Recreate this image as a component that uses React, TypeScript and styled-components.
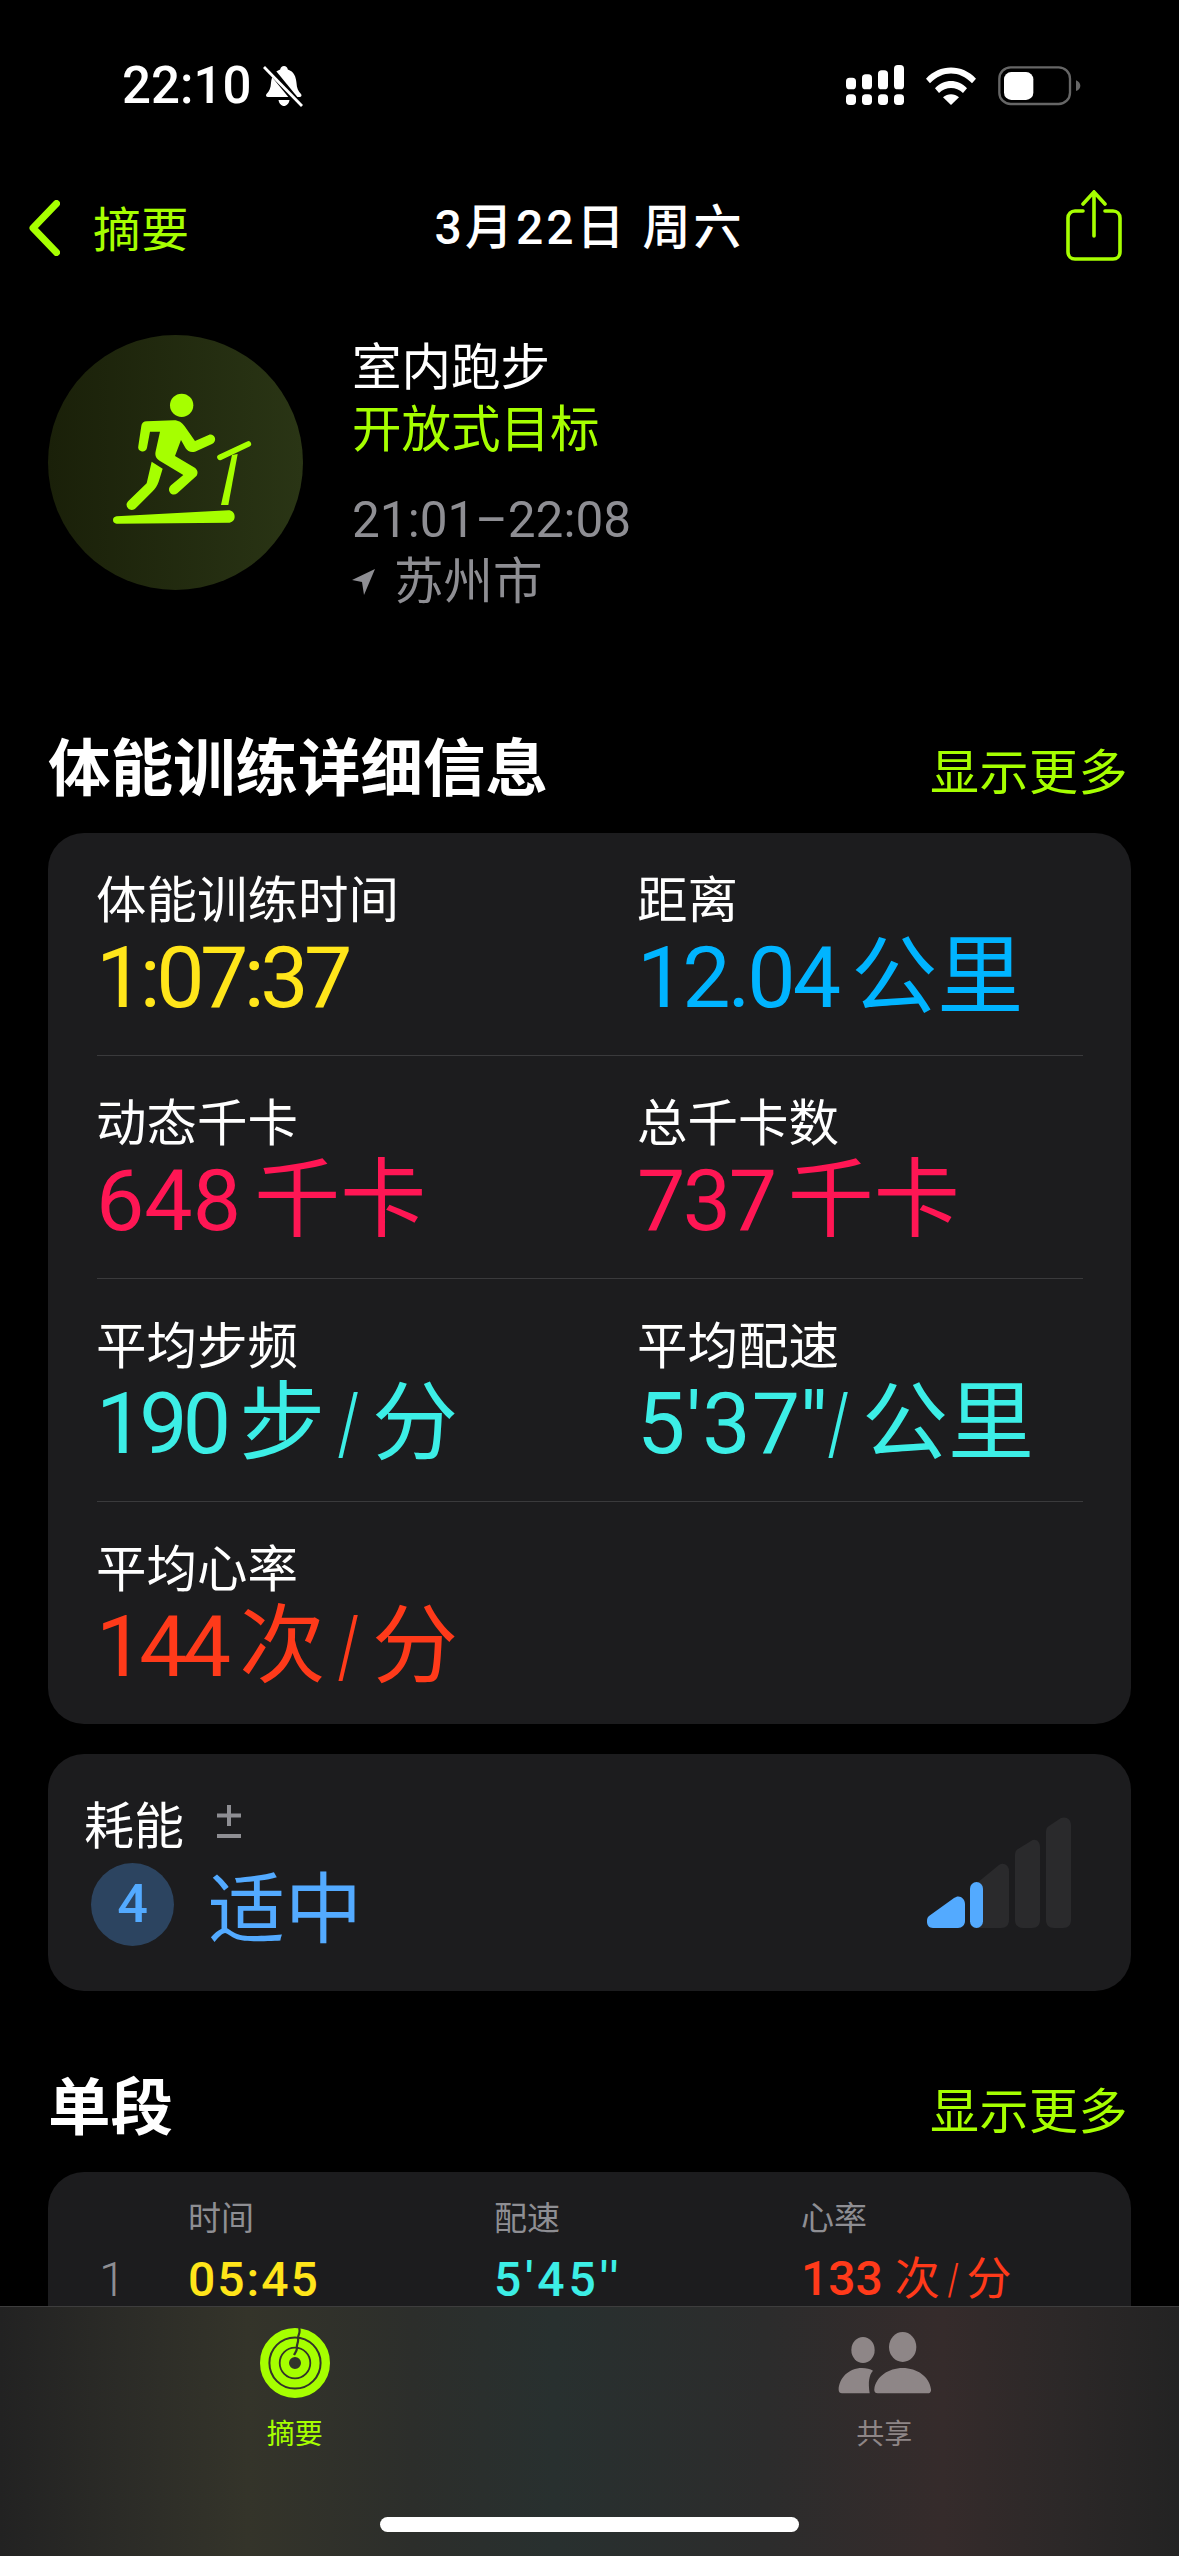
import React from "react";
import styled, { createGlobalStyle } from "styled-components";

const GREEN = "#a6ff00";
const GRAY = "#8e8e93";
const BLUE = "#53aaff";
const YELLOW = "#ffe51a";
const SKY = "#00b4ff";
const PINK = "#ff1654";
const CYAN = "#3ceee6";
const RED = "#ff3a1a";
const CARD = "#1c1c1e";
const FONT = `Roboto, "Noto Sans CJK SC", sans-serif`;
const CJK = `"Noto Sans CJK SC", sans-serif`;

const GlobalStyle = createGlobalStyle`
  html, body {
    margin: 0;
    padding: 0;
    background: #000;
  }
`;

const Page = styled.div`
  position: relative;
  width: 1179px;
  height: 2556px;
  overflow: hidden;
  background: #000;
  color: #fff;
  font-family: ${FONT};
`;

const StatusBar = styled.div`
  height: 172px;
  display: flex;
  align-items: center;
  justify-content: space-between;
  padding: 0 98px 0 122px;
  box-sizing: border-box;
`;

const StatusLeft = styled.div`
  display: flex;
  align-items: center;
  gap: 12px;
`;

const Clock = styled.span`
  font-size: 51px;
  line-height: 60px;
  font-weight: 500;
`;

const StatusIcons = styled.div`
  display: flex;
  align-items: center;
`;

const NavBar = styled.div`
  height: 112px;
  display: grid;
  grid-template-columns: 1fr auto 1fr;
  align-items: center;
  padding: 0 43px;
`;

const BackLink = styled.div`
  display: flex;
  align-items: center;
  gap: 33px;
  margin-left: -14px;
  color: ${GREEN};
  font-family: ${CJK};
  font-size: 48px;
  line-height: 60px;
`;

const BackText = styled.span`
  margin-bottom: 5px;
`;

const NavTitle = styled.div`
  font-size: 48px;
  line-height: 60px;
  font-weight: 500;
  letter-spacing: 3px;
  white-space: pre;
`;

const ShareButton = styled.div`
  display: flex;
  justify-content: flex-end;
  margin: 0 14px 4px 0;
`;

const Workout = styled.div`
  display: flex;
  gap: 49px;
  height: 255px;
  margin-top: 51px;
  padding-left: 48px;
`;

const Badge = styled.div`
  width: 255px;
  height: 255px;
  border-radius: 50%;
  flex: none;
  background: linear-gradient(90deg, #1a2009 0%, #2a3515 100%);
`;

const WorkoutText = styled.div`
  display: flex;
  flex-direction: column;
  padding-top: 2px;
`;

const WorkoutLine = styled.div<{ $color: string; $gap?: number }>`
  display: flex;
  align-items: center;
  gap: 18px;
  color: ${(p) => p.$color};
  font-size: 49.5px;
  line-height: 62px;
  margin-top: ${(p) => p.$gap ?? 0}px;
`;

const SectionHead = styled.div<{ $top: number }>`
  display: flex;
  align-items: center;
  justify-content: space-between;
  height: 80px;
  margin: ${(p) => p.$top}px 51px 25px 48px;
`;

const SectionTitle = styled.h2`
  margin: 0 0 8px;
  font-family: ${CJK};
  font-size: 62.5px;
  line-height: 72px;
  font-weight: 700;
`;

const MoreLink = styled.span`
  color: ${GREEN};
  font-family: ${CJK};
  font-size: 49px;
  letter-spacing: 0.5px;
`;

const Card = styled.div`
  margin: 0 48px;
  background: ${CARD};
  border-radius: 36px;
`;

const MetricRow = styled.div`
  display: grid;
  grid-template-columns: 541px 1fr;
  height: 222px;
  margin: 0 48px 0 48px;
  padding-top: 33px;
  box-sizing: border-box;
`;

const Divider = styled.div`
  height: 1px;
  margin: 0 48px 0 49px;
  background: #3a3a3c;
`;

const MetricLabel = styled.div`
  font-family: ${CJK};
  font-size: 50.5px;
  line-height: 60px;
  margin-bottom: 4px;
`;

const MetricValue = styled.div<{ $color: string }>`
  color: ${(p) => p.$color};
  font-size: 86px;
  line-height: 96px;
  word-spacing: -8px;
  white-space: pre;
`;

// Figures carry their own tracking, since each string needs a different squeeze
const Num = styled.span<{ $track: number }>`
  letter-spacing: ${(p) => p.$track}px;
`;

// The unit slash is far narrower than Roboto's own
const Slash = styled.span`
  display: inline-block;
  margin: 0 -0.09em;
  transform: scaleX(0.6);
`;

const EffortCard = styled(Card)`
  display: flex;
  justify-content: space-between;
  height: 237px;
  margin-top: 30px;
  padding: 38px 60px 0 36px;
  box-sizing: border-box;
`;

const EffortLabel = styled.div`
  display: flex;
  align-items: center;
  gap: 32px;
  font-family: ${CJK};
  font-size: 50px;
  line-height: 60px;
`;

const EffortLevel = styled.div`
  display: flex;
  align-items: center;
  gap: 34px;
  margin: 10px 0 0 7px;
  color: ${BLUE};
  font-family: ${CJK};
  font-size: 77px;
  line-height: 84px;
`;

const EffortNumber = styled.div`
  width: 83px;
  height: 83px;
  border-radius: 50%;
  display: flex;
  align-items: center;
  justify-content: center;
  background: #2c4460;
  font-family: ${FONT};
  font-size: 54px;
  font-weight: 500;
`;

const EffortBars = styled.svg`
  flex: none;
  margin-top: 25px;
`;

const SegmentGrid = styled.div`
  display: grid;
  grid-template-columns: 89px 306px 307px 1fr;
  padding: 22px 0 300px 51px;
  align-items: center;
`;

const SegmentHeading = styled.div`
  color: ${GRAY};
  font-family: ${CJK};
  font-size: 33px;
  line-height: 44px;
`;

const SegmentValue = styled.div<{ $color: string; $track?: number; $weight?: number }>`
  color: ${(p) => p.$color};
  font-size: 48px;
  line-height: 60px;
  margin-top: 11px;
  letter-spacing: ${(p) => p.$track ?? 0}px;
  font-weight: ${(p) => p.$weight ?? 500};
  white-space: pre;
`;

const SegmentUnit = styled.span`
  font-size: 45px;
  font-weight: 400;
  word-spacing: -3px;
`;

const TabBar = styled.div`
  position: absolute;
  left: 0;
  right: 0;
  bottom: 0;
  height: 250px;
  box-sizing: border-box;
  border-top: 1px solid #3d3d3d;
  display: grid;
  grid-template-columns: 1fr 1fr;
  padding-top: 21px;
  background: linear-gradient(
    90deg,
    #222222 0%,
    #2b2b27 10%,
    #34342a 21%,
    #2c2e2b 35%,
    #28302f 47%,
    #2c2c2c 65%,
    #352b2b 80%,
    #2c2828 90%,
    #232323 100%
  );
`;

const Tab = styled.div<{ $color: string }>`
  display: flex;
  flex-direction: column;
  align-items: center;
  gap: 16px;
  color: ${(p) => p.$color};
  font-family: ${CJK};
  font-size: 28px;
  line-height: 36px;
`;

const HomeBar = styled.div`
  position: absolute;
  left: 380px;
  bottom: 24px;
  width: 419px;
  height: 15px;
  border-radius: 8px;
  background: #fff;
`;

const BellOff = () => (
  <svg width="42" height="42" viewBox="0 0 42 42">
    <path
      fill="#fff"
      d="M21 1c2 0 3.500 1.500 3.800 3.500C31 6.500 33 12 33.500 18c.3 5 1.500 8 4.500 11 1 1.500.5 3-1.500 3H5c-2 0-2.500-1.500-1.500-3 3-3 4.200-6 4.500-11C8.500 12 11 6.500 17.200 4.500 17.500 2.500 19 1 21 1zM15.500 35h11c-.5 3.500-3 6-5.500 6s-5-2.500-5.500-6z"
    />
    <path stroke="#000" strokeWidth="7" d="M2 -2 38 42" />
    <path stroke="#fff" strokeWidth="2.800" d="M1 2 39 41" />
  </svg>
);

const SignalIcon = () => (
  <svg width="58" height="42" viewBox="0 0 174 126" fill="#fff">
    <rect x="0" y="38" width="30" height="35" rx="11" />
    <rect x="48" y="28" width="30" height="45" rx="11" />
    <rect x="96" y="16" width="30" height="57" rx="11" />
    <rect x="144" y="0" width="30" height="73" rx="11" />
    <rect x="0" y="88" width="30" height="32" rx="11" />
    <rect x="48" y="88" width="30" height="32" rx="11" />
    <rect x="96" y="88" width="30" height="32" rx="11" />
    <rect x="144" y="88" width="30" height="32" rx="11" />
  </svg>
);

const WifiIcon = () => (
  <svg width="50" height="38" viewBox="0 0 150 114" fill="#fff" style={{ marginLeft: 22 }}>
    <path d="M0 35C40 -10 110 -10 150 35l-12 14C100 10 50 10 12 49z" />
    <path d="M27 64C55 35 95 35 123 64l-12 14C90 58 60 58 39 78z" />
    <path d="M51 91c14-12 34-12 48 0L75 114z" />
  </svg>
);

const BatteryIcon = () => (
  <svg width="83" height="40" viewBox="0 0 249 120" style={{ marginLeft: 22 }}>
    <rect x="4" y="4" width="212" height="110" rx="34" fill="none" stroke="#666" strokeWidth="7" />
    <rect x="18" y="18" width="88" height="84" rx="22" fill="#fff" />
    <path d="M234 43c8 3 13 9 13 16s-5 13-13 16z" fill="#666" />
  </svg>
);

const Chevron = () => (
  <svg width="31" height="56" viewBox="0 0 31 56" fill="none">
    <path d="M27.500 3.500 4 28 27.500 52.500" stroke={GREEN} strokeWidth="7" strokeLinecap="round" strokeLinejoin="round" />
  </svg>
);

const ShareIcon = () => (
  <svg width="56" height="72" viewBox="0 0 56 72" fill="none" stroke={GREEN} strokeWidth="3.600" strokeLinecap="round">
    <path d="M17 21H9c-4 0-7 3-7 7v34c0 4 3 7 7 7h38c4 0 7-3 7-7V28c0-4-3-7-7-7h-8" />
    <path d="M28 46V3M17 14 28 2l11 12" />
  </svg>
);

// Person on a treadmill, drawn at triple scale
const TreadmillIcon = () => (
  <svg width="255" height="255" viewBox="0 0 255 255">
    <g transform="translate(52 45) scale(0.3333)" fill={GREEN}>
      <circle cx="245" cy="76" r="35" />
      <path d="M140 124 222 121C236 121 246 128 254 139L285 183 326 165C334 161 342 166 345 174 347 182 343 188 336 192L285 215C273 219 263 214 257 205L243 180 225 228 282 262C292 268 296 278 290 287L232 340C224 346 214 345 209 336 205 329 207 322 213 316L250 285 180 243C168 236 164 226 167 214L180 155 150 155 141 203C139 212 132 216 124 214 117 212 113 206 115 198L124 138C125 129 131 124 140 124z" />
      <path d="M155 245 188 266 176 305C172 316 166 326 158 334L107 385C100 392 90 391 84 385 78 378 78 370 85 363L140 310z" />
      <path d="M50 409 385 391C396 391 404 399 404 410 404 421 396 428 385 428L50 431C43 431 39 426 39 420 39 414 43 410 50 409z" />
      <path d="M396 225 413 222 385 375 363 375z" />
      <path d="M360 232 445 192" stroke={GREEN} strokeWidth="17" strokeLinecap="round" fill="none" />
    </g>
  </svg>
);

const LocationArrow = () => (
  <svg width="24" height="26" viewBox="0 0 24 26" fill={GRAY}>
    <path d="M23 0 12 26 10 13 0 11z" />
  </svg>
);

const PlusMinus = () => (
  <svg width="26" height="34" viewBox="0 0 26 34" stroke={GRAY} strokeWidth="4">
    <path d="M13 0V21M1 10.500H25M1 31H25" />
  </svg>
);

// Rings share one seam at the top, running from the outer band to the hole
const RingsIcon = () => (
  <svg width="70" height="70" viewBox="0 0 70 70" fill="none">
    <circle cx="35" cy="35" r="30.800" stroke={GREEN} strokeWidth="8.400" />
    <circle cx="35" cy="35" r="20.400" stroke={GREEN} strokeWidth="8.400" />
    <circle cx="35" cy="35" r="10.200" stroke={GREEN} strokeWidth="8.400" />
    <path d="M39 0C41 4 38 7 38 10 39 14 36 17 37 20 37 23 35 25 34 27" stroke="#34342a" strokeWidth="2.200" />
  </svg>
);

const PeopleIcon = () => (
  <svg width="94" height="70" viewBox="50 54 282 210" fill="#8e8687">
    <ellipse cx="128" cy="120" rx="35" ry="39" />
    <ellipse cx="247" cy="111" rx="41" ry="45" />
    <path d="M55 240C55 205 85 174 125 174 138 174 150 177 158 182 146 196 143 215 148 250H65C59 250 55 246 55 240z" />
    <path d="M162 238C166 200 205 174 247 174 290 174 328 200 332 238 333 245 329 250 322 250H172C165 250 161 245 162 238z" />
  </svg>
);

type Metric = { label: string; value: React.ReactNode; color: string };

const metricRows: Metric[][] = [
  [
    { label: "体能训练时间", value: <Num $track={-4.5}>1:07:37</Num>, color: YELLOW },
    { label: "距离", value: <><Num $track={-3}>12.04</Num> 公里</>, color: SKY },
  ],
  [
    { label: "动态千卡", value: <><Num $track={0}>648</Num> 千卡</>, color: PINK },
    { label: "总千卡数", value: <><Num $track={-2.5}>737</Num> 千卡</>, color: PINK },
  ],
  [
    { label: "平均步频", value: <><Num $track={-5}>190</Num> 步 <Slash>/</Slash> 分</>, color: CYAN },
    { label: "平均配速", value: <><Num $track={1}>5'37''</Num><Slash>/</Slash> 公里</>, color: CYAN },
  ],
  [{ label: "平均心率", value: <><Num $track={-5}>144</Num> 次 <Slash>/</Slash> 分</>, color: RED }],
];

export default function App() {
  return (
    <Page>
      <GlobalStyle />
      <StatusBar>
        <StatusLeft>
          <Clock>22:10</Clock>
          <BellOff />
        </StatusLeft>
        <StatusIcons>
          <SignalIcon />
          <WifiIcon />
          <BatteryIcon />
        </StatusIcons>
      </StatusBar>

      <NavBar>
        <BackLink>
          <Chevron />
          <BackText>摘要</BackText>
        </BackLink>
        <NavTitle>3月22日 周六</NavTitle>
        <ShareButton>
          <ShareIcon />
        </ShareButton>
      </NavBar>

      <Workout>
        <Badge>
          <TreadmillIcon />
        </Badge>
        <WorkoutText>
          <WorkoutLine $color="#fff">室内跑步</WorkoutLine>
          <WorkoutLine $color={GREEN}>开放式目标</WorkoutLine>
          <WorkoutLine $color={GRAY} $gap={28}>21:01–22:08</WorkoutLine>
          <WorkoutLine $color={GRAY}>
            <LocationArrow />
            苏州市
          </WorkoutLine>
        </WorkoutText>
      </Workout>

      <SectionHead $top={138}>
        <SectionTitle>体能训练详细信息</SectionTitle>
        <MoreLink>显示更多</MoreLink>
      </SectionHead>

      <Card>
        {metricRows.map((row, i) => (
          <React.Fragment key={i}>
            {i > 0 && <Divider />}
            <MetricRow>
              {row.map((m) => (
                <div key={m.label}>
                  <MetricLabel>{m.label}</MetricLabel>
                  <MetricValue $color={m.color}>{m.value}</MetricValue>
                </div>
              ))}
            </MetricRow>
          </React.Fragment>
        ))}
      </Card>

      <EffortCard>
        <div>
          <EffortLabel>
            耗能
            <PlusMinus />
          </EffortLabel>
          <EffortLevel>
            <EffortNumber>4</EffortNumber>
            适中
          </EffortLevel>
        </div>
        <EffortBars width="144" height="112" viewBox="0 0 144 112">
          <path fill="#2a2a2c" d="M50 66 72 48C76 45 82 48 82 54V103C82 108 79 111 74 111H50z" />
          <path fill="#2a2a2c" d="M88 38C88 35 89 33 91 32L104 24C108 21 113 24 113 30V103C113 108 110 111 105 111H96C91 111 88 108 88 103z" />
          <path fill="#2a2a2c" d="M119 15C119 12 120 10 122 9L134 1C139 -1 144 2 144 8V103C144 108 141 111 136 111H127C122 111 119 108 119 103z" />
          <path fill={BLUE} d="M2 99 27 81C32 77 38 81 38 87V104C38 108 35 111 31 111H6C2 111 0 108 0 105 0 102 0 101 2 99z" />
          <rect x="43" y="65" width="13" height="46" rx="6.500" fill={BLUE} />
        </EffortBars>
      </EffortCard>

      <SectionHead $top={76}>
        <SectionTitle>单段</SectionTitle>
        <MoreLink>显示更多</MoreLink>
      </SectionHead>

      <Card>
        <SegmentGrid>
          <span />
          <SegmentHeading>时间</SegmentHeading>
          <SegmentHeading>配速</SegmentHeading>
          <SegmentHeading>心率</SegmentHeading>
          <SegmentValue $color={GRAY} $weight={300}>1</SegmentValue>
          <SegmentValue $color={YELLOW} $track={2}>05:45</SegmentValue>
          <SegmentValue $color={CYAN} $track={4}>5'45''</SegmentValue>
          <SegmentValue $color={RED}>133 <SegmentUnit>次 <Slash>/</Slash> 分</SegmentUnit></SegmentValue>
        </SegmentGrid>
      </Card>

      <TabBar>
        <Tab $color={GREEN}>
          <RingsIcon />
          摘要
        </Tab>
        <Tab $color="#8e8687">
          <PeopleIcon />
          共享
        </Tab>
        <HomeBar />
      </TabBar>
    </Page>
  );
}
